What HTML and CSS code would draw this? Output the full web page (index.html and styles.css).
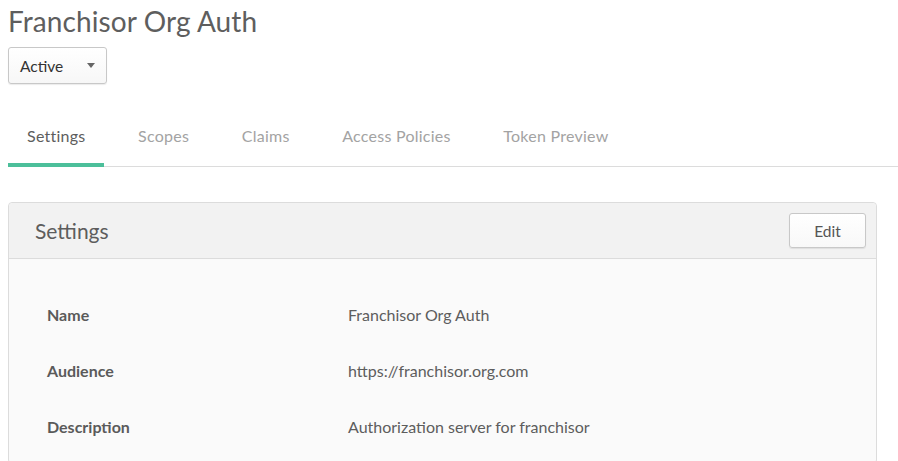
FILE: index.html
```html
<!DOCTYPE html>
<html>
<head>
<meta charset="utf-8">
<link rel="stylesheet" href="styles.css">
</head>
<body>
<div class="page">
  <h1 class="title">Franchisor Org Auth</h1>
  <button class="status">Active <span class="caret"></span></button>
  <nav class="tabs">
    <a class="tab active">Settings</a>
    <a class="tab">Scopes</a>
    <a class="tab">Claims</a>
    <a class="tab">Access Policies</a>
    <a class="tab">Token Preview</a>
  </nav>
  <section class="panel">
    <header class="panel-head">
      <h2 class="panel-title">Settings</h2>
      <button class="edit">Edit</button>
    </header>
    <div class="panel-body">
      <div class="row"><div class="label">Name</div><div class="value">Franchisor Org Auth</div></div>
      <div class="row"><div class="label">Audience</div><div class="value">https://franchisor.org.com</div></div>
      <div class="row"><div class="label">Description</div><div class="value">Authorization server for franchisor</div></div>
    </div>
  </section>
</div>
</body>
</html>
```
FILE: styles.css
```css
* { box-sizing: border-box; }
html, body { margin: 0; padding: 0; background: #fff; }
body { font-family: Lato, "Open Sans", sans-serif; color: #5d5d5d; }
.page { padding: 0 0 0 8px; height: 461px; overflow: hidden; }
.title { margin: 0; padding-top: 4px; font-size: 28px; line-height: 34px; font-weight: 400; color: #5e5e5e; letter-spacing: 0.1px; }
.status {
  margin-top: 9px; width: 99px; height: 37px; display: flex; align-items: center; justify-content: space-between;
  padding: 0 11px 0 11px; font: 400 15.5px Lato, sans-serif; color: #333;
  background: linear-gradient(#fff, #f7f7f7); border: 1px solid #c8c8c8; border-radius: 3px;
  box-shadow: 0 1px 1px rgba(0,0,0,0.08);
}
.caret { width: 0; height: 0; border-left: 4px solid transparent; border-right: 4px solid transparent; border-top: 5px solid #666; }
.tabs { display: flex; margin-top: 30px; border-bottom: 1px solid #dcdcdc; }
.tab { display: block; padding: 12px 18px 18px 19px; font-size: 16px; line-height: 19px; color: #a3a3a3; margin-right: 15.6px; border-bottom: 4px solid transparent; margin-bottom: -1px; letter-spacing: 0.25px; }
.tab.active { color: #5d5d5d; border-bottom-color: #4cbf9a; }
.panel { margin: 35px 21px 0 0; border: 1px solid #dcdcdc; border-radius: 4px; background: #fafafa; }
.panel-head { display: flex; align-items: center; justify-content: space-between; height: 56px; padding: 0 10px 0 26px; background: #f2f2f2; border-bottom: 1px solid #dcdcdc; border-radius: 4px 4px 0 0; }
.panel-title { margin: 0; font-size: 21px; font-weight: 400; color: #5d5d5d; }
.edit { width: 77px; height: 35px; font: 400 15.5px Lato, sans-serif; color: #555; background: linear-gradient(#fff, #f8f8f8); border: 1px solid #c8c8c8; border-radius: 3px; box-shadow: 0 1px 1px rgba(0,0,0,0.08); }
.panel-body { padding: 36px 0 0 38px; }
.row { display: flex; height: 56px; font-size: 16px; line-height: 40px; }
.label { width: 301px; font-weight: 700; color: #5a5a5a; }
.value { color: #5d5d5d; }
```
